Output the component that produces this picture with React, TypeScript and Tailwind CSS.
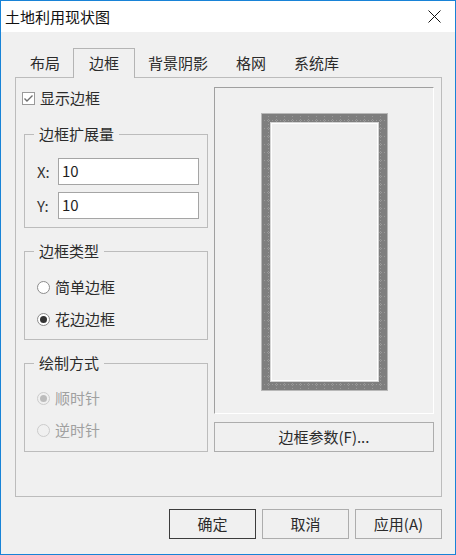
import { ReactNode } from "react"

const Radio = ({ checked, disabled, label }: { checked?: boolean; disabled?: boolean; label: string }) => (
    <div className="flex items-center h-[20px] pl-[12px] gap-[5px]">
        <span className={`flex items-center justify-center w-[13px] h-[13px] rounded-full border ${disabled ? "border-[#cccccc] bg-[#f0f0f0]" : "border-[#8c8c8c] bg-white"}`}>
            {checked && <span className={`w-[7px] h-[7px] rounded-full ${disabled ? "bg-[#bcbcbc]" : "bg-[#333333]"}`}></span>}
        </span>
        <span className={`leading-[20px] ${disabled ? "text-[#a0a0a0]" : ""}`}>{label}</span>
    </div>
)

const Group = ({ title, h, children }: { title: string; h: string; children: ReactNode }) => (
    <fieldset className={`border border-[#bcbcbc] ${h}`}>
        <legend className="ml-[9px] px-[5px] leading-[20px]">{title}</legend>
        {children}
    </fieldset>
)

const tabs = ["布局", "边框", "背景阴影", "格网", "系统库"]

const App = () => {
    return (
        <div className="w-[456px] h-[555px] border border-[#1883d7] flex flex-col bg-[#f0f0f0] text-[15px] text-[#2b2b2b] font-['Noto_Sans_CJK_SC',sans-serif]">

            {/* title bar */}
            <div className="h-[31px] bg-white flex items-center justify-between pl-[4px] pr-[14px]">
                <span className="leading-[20px] text-[#111111]">土地利用现状图</span>
                <svg width="13" height="13" viewBox="0 0 13 13">
                    <path d="M0.5 0.5L12.5 12.5M12.5 0.5L0.5 12.5" stroke="#111" strokeWidth="1" />
                </svg>
            </div>

            <div className="flex-1 flex flex-col pl-[14px] pt-[17px]">

                {/* tabs */}
                <div className="flex h-[28px] pl-[1px] relative z-10">
                    {tabs.map((t) =>
                        t === "边框" ? (
                            <div key={t} className="-mx-[1px] -mt-[1px] h-[30px] px-[15px] pt-[4px] border border-b-0 border-[#b4b4b4] bg-[#f0f0f0] leading-[20px]">{t}</div>
                        ) : (
                            <div key={t} className="px-[14px] pt-[4px] leading-[20px]">{t}</div>
                        )
                    )}
                </div>

                {/* tab panel */}
                <div className="w-[427px] h-[420px] border border-[#bcbcbc] flex gap-[6px] pl-[8px] pt-[9px]">

                    <div className="w-[184px] flex flex-col">
                        <div className="flex items-center h-[20px] mt-[1px] -ml-[2px] gap-[5px]">
                            <span className="w-[13px] h-[13px] border border-[#9a9a9a] bg-white flex items-center justify-center">
                                <svg width="11" height="11" viewBox="0 0 11 11">
                                    <path d="M1.5 5.5L4 8L9.5 2.5" stroke="#6e6e6e" strokeWidth="1.4" fill="none" />
                                </svg>
                            </span>
                            <span className="leading-[20px]">显示边框</span>
                        </div>

                        <div className="mt-[16px]">
                            <Group title="边框扩展量" h="h-[104px]">
                                <div className="flex flex-col gap-[7px] mt-[14px] pl-[12px]">
                                    {["X:", "Y:"].map((l) => (
                                        <div key={l} className="flex items-center">
                                            <span className="w-[21px] leading-[20px] text-[#333333]">{l}</span>
                                            <div className="w-[141px] h-[27px] border border-[#a5a5a5] bg-white flex items-center pl-[3px] text-[#1e1e1e]">10</div>
                                        </div>
                                    ))}
                                </div>
                            </Group>
                        </div>

                        <div className="mt-[13px]">
                            <Group title="边框类型" h="h-[99px]">
                                <div className="flex flex-col gap-[12px] mt-[16px]">
                                    <Radio label="简单边框" />
                                    <Radio label="花边边框" checked />
                                </div>
                            </Group>
                        </div>

                        <div className="mt-[13px]">
                            <Group title="绘制方式" h="h-[99px]">
                                <div className="flex flex-col gap-[12px] mt-[15px]">
                                    <Radio label="顺时针" checked disabled />
                                    <Radio label="逆时针" disabled />
                                </div>
                            </Group>
                        </div>
                    </div>

                    <div className="w-[220px] flex flex-col">
                        <div className="h-[327px] border border-[#a0a0a0] border-r-white border-b-white flex justify-center pt-[25px]">
                            <svg width="127" height="278" viewBox="0 0 127 278">
                                <defs>
                                    <pattern id="lace" width="8" height="8" patternUnits="userSpaceOnUse">
                                        <rect width="8" height="8" fill="#7e7e7e" />
                                        <path d="M7.5 0V8M0 7.5H8" stroke="#999999" strokeWidth="1" strokeDasharray="1 2" />
                                    </pattern>
                                </defs>
                                <path d="M0 0H127V278H0Z M9 9V269H118V9Z" fill="url(#lace)" fillRule="evenodd" />
                                <rect x="0.5" y="0.5" width="126" height="277" fill="none" stroke="#b8b8b8" />
                                <rect x="9.5" y="9.5" width="108" height="259" fill="none" stroke="#d4d4d4" />
                                <rect x="10.5" y="10.5" width="106" height="257" fill="none" stroke="#ffffff" />
                            </svg>
                        </div>
                        <button className="mt-[8px] h-[30px] border border-[#adadad] bg-[#f0f0f0] leading-[20px]">边框参数(F)...</button>
                    </div>
                </div>

                {/* dialog buttons */}
                <div className="w-[427px] mt-[12px] flex justify-end gap-[6px]">
                    <button className="w-[87px] h-[30px] border border-[#3c3c3c] bg-[#f0f0f0] leading-[20px]">确定</button>
                    <button className="w-[87px] h-[30px] border border-[#adadad] bg-[#f0f0f0] leading-[20px]">取消</button>
                    <button className="w-[87px] h-[30px] border border-[#adadad] bg-[#f0f0f0] leading-[20px]">应用(A)</button>
                </div>
            </div>
        </div>
    )
}

export default App
